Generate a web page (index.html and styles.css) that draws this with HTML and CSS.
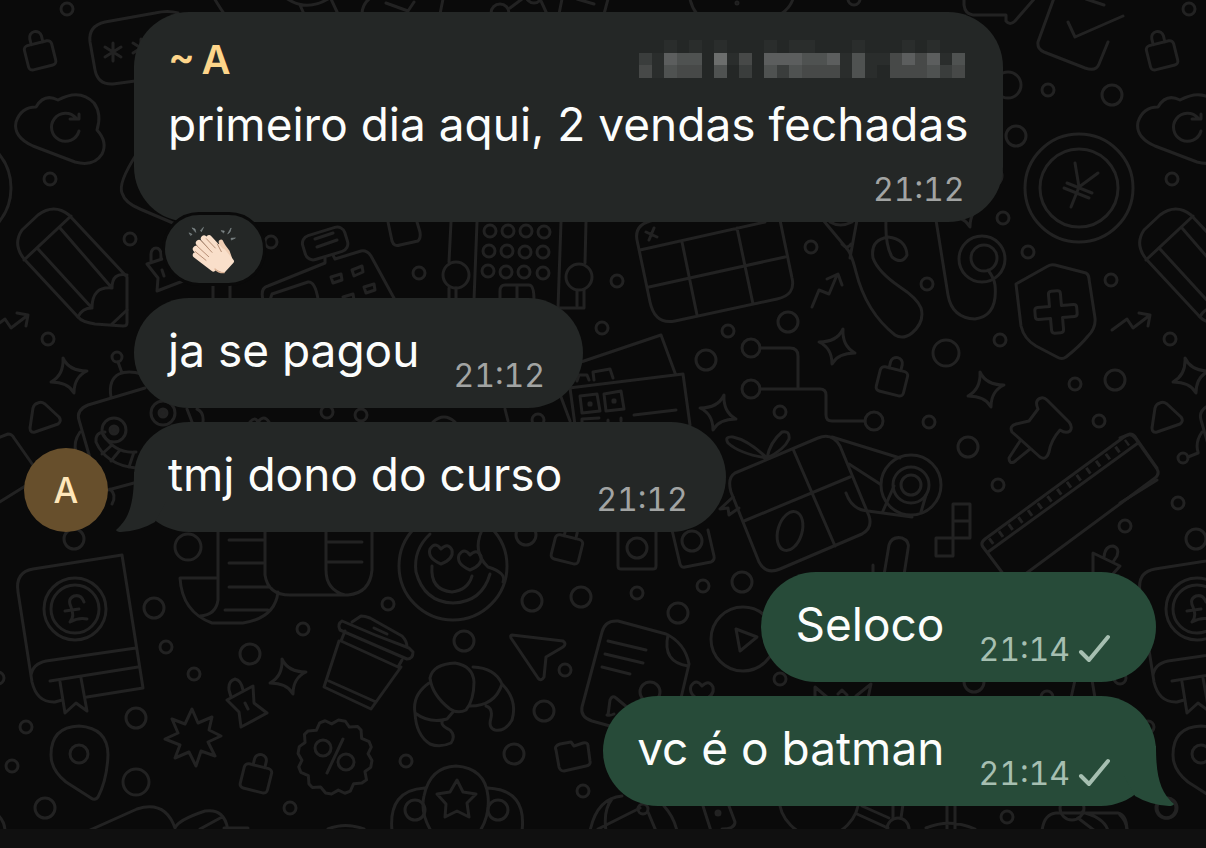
FILE: index.html
```html
<!DOCTYPE html>
<html lang="pt-BR">

<head>
    <meta charset="utf-8" />
    <title>Chat</title>
    <meta name="viewport" content="width=device-width, initial-scale=1">
    <link rel="stylesheet" href="styles.css">
</head>

<body>
    <main class="chat">
        <svg class="wallpaper" aria-hidden="true">
            <defs>
                <g id="lock">
                    <rect x="-14" y="-8" width="28" height="25" rx="4" />
                    <path d="M-6-8v-6a6 6 0 0 1 12 0v6" />
                </g>
                <path id="sparkle" d="M-6-18Q0-5 18-5Q5 1 5 17Q-1 6-18 6Q-5-1-6-18Z" />
                <path id="heart" d="M0 10Q-14 4-11-5Q-6-13 0-5Q7-12 11-4Q13 5 0 10Z" />
                <path id="asterisk" d="M0-9V9M-8-5L8 5M-8 5L8-5" />
                <circle id="s" r="6" />
                <circle id="m" r="10" />
                <circle id="l" r="13" />

                <g id="doodles">
                    <!-- dots -->
                    <use href="#s" x="67" y="9" /><use href="#s" x="50" y="179" /><use href="#s" x="130" y="239" />
                    <use href="#s" x="271" y="242" /><use href="#s" x="48" y="339" /><use href="#s" x="419" y="273" />
                    <use href="#s" x="617" y="281" /><use href="#s" x="602" y="328" /><use href="#s" x="811" y="247" />
                    <use href="#s" x="927" y="284" /><use href="#s" x="1003" y="218" /><use href="#s" x="1028" y="252" />
                    <use href="#s" x="728" y="331" /><use href="#s" x="1048" y="90" /><use href="#s" x="1111" y="280" />
                    <use href="#s" x="1000" y="340" /><use href="#s" x="1075" y="384" /><use href="#s" x="780" y="412" />
                    <use href="#s" x="929" y="422" /><use href="#s" x="1099" y="421" /><use href="#s" x="998" y="485" />
                    <use href="#s" x="1125" y="526" /><use href="#s" x="56" y="503" /><use href="#s" x="303" y="629" />
                    <use href="#s" x="166" y="647" /><use href="#s" x="194" y="674" /><use href="#s" x="-2" y="678" />
                    <use href="#s" x="26" y="727" /><use href="#s" x="12" y="766" /><use href="#s" x="290" y="808" />
                    <use href="#s" x="388" y="604" /><use href="#s" x="406" y="761" /><use href="#s" x="565" y="670" />
                    <use href="#s" x="637" y="593" /><use href="#s" x="703" y="586" /><use href="#s" x="583" y="791" />
                    <use href="#s" x="1007" y="817" /><use href="#s" x="780" y="679" /><use href="#s" x="538" y="420" />
                    <use href="#s" x="327" y="412" /><use href="#s" x="361" y="415" /><use href="#s" x="854" y="-1" />
                    <use href="#s" x="1047" y="697" />
                    <use href="#m" x="1112" y="95" /><use href="#m" x="1016" y="136" /><use href="#m" x="788" y="322" />
                    <use href="#m" x="706" y="360" /><use href="#m" x="1115" y="380" /><use href="#m" x="968" y="447" />
                    <use href="#m" x="74" y="539" /><use href="#m" x="154" y="608" /><use href="#m" x="250" y="654" />
                    <use href="#m" x="136" y="718" /><use href="#m" x="45" y="808" /><use href="#m" x="464" y="641" />
                    <use href="#m" x="532" y="601" /><use href="#m" x="581" y="597" /><use href="#m" x="678" y="613" />
                    <use href="#m" x="742" y="582" /><use href="#m" x="544" y="711" /><use href="#m" x="514" y="754" />
                    <use href="#m" x="526" y="535" /><use href="#m" x="650" y="692" /><use href="#m" x="992" y="176" />
                    <use href="#m" x="1166" y="808" /><use href="#m" x="974" y="682" />
                    <use href="#l" x="1008" y="85" /><use href="#l" x="188" y="547" /><use href="#l" x="946" y="353" />
                    <use href="#l" x="136" y="782" /><use href="#l" x="456" y="275" /><use href="#l" x="579" y="277" />

                    <!-- repeated small icons -->
                    <use href="#lock" transform="translate(39 51) rotate(-14)" />
                    <use href="#lock" transform="translate(893 377) rotate(14)" />
                    <use href="#lock" transform="translate(257 774) rotate(14)" />
                    <use href="#lock" transform="translate(568 545) rotate(14)" />
                    <use href="#sparkle" x="69" y="376" />
                    <use href="#sparkle" x="288" y="677" />
                    <use href="#sparkle" x="986" y="390" />
                    <use href="#sparkle" transform="translate(837 347) scale(-1 1)" />
                    <use href="#sparkle" transform="translate(718 413) scale(-1 1)" />
                    <use href="#sparkle" x="965" y="210" />
                    <path d="M-10 330L5 319L11 328L28 315M17 313L28 315L26 326" />
                    <path d="M812 307L819 290L829 294L837 275M827 279L838 274L842 285" />

                    <!-- top edge -->
                    <path d="M214-2Q220 8 225 15M286-2Q306 12 328-1M300 5L304 14M331-1L338 14M362 14Q362 5 369-1M386 3L408 11L414 2M443-1L440 14M510 8L522-1M541 1L547 14M562-1L559 14M577-1L594 4M608-1L604 14M690-1Q692 8 697 14M793-1Q790 8 781 14" />
                    <circle cx="500" cy="13" r="9" />
                    <circle cx="534" cy="-5" r="8" />
                    <circle cx="737" cy="3" r="1" />
                    <path d="M964-2V5Q965 14 973 15H1006V21Q1010 26 1015 21L1035-2" />
                    <path d="M1054-2L1038 42Q1037 49 1044 52L1085 68Q1096 72 1099 64L1108 42M1068 22L1075 37L1123 16M1086-1L1104 5" />

                    <!-- password card -->
                    <path d="M178 13Q168 10 155 13L105 22Q88 26 90 42L95 70Q98 85 113 84L150 79" />
                    <use href="#asterisk" x="113" y="52" />
                    <use href="#asterisk" x="141" y="48" />

                    <!-- cloud -->
                    <path d="M36 107Q44 93 58 100Q80 88 94 103Q102 114 97 130Q108 142 102 154Q94 167 75 162L33 146Q13 137 16 122Q21 107 36 107Z" />
                    <path d="M79 131A14 14 0 1 1 76 118M70 119H79V114" />

                    <!-- yen coin -->
                    <circle cx="-43" cy="188" r="54" />
                    <circle cx="-43" cy="188" r="39" />
                    <path d="M-47 163L-43 187L-24 173M-43 187L-51 207M-55 183L-30 193M-58 188L-33 198" />

                    <!-- pencil -->
                    <path d="M136 155Q118 183 122 193Q125 203 140 209L180 226" />
                    <path d="M25 260Q12 245 22 230L38 215Q54 203 69 215L127 277V323Q127 326 123 326L95 324Q82 322 78 317Z" />
                    <path d="M24 260L71 216M38 249L92 308M60 228L112 288M127 275Q112 272 112 288Q92 286 92 308Q82 308 78 317M112 324L127 310" />

                    <!-- clips and tags -->
                    <path d="M183 281L157 291L158 278L147 264L162 259M151 262V254A5 6 0 0 1 161 254V259M162 270L164 276M213 284V300M230 284V300" />
                    <path d="M227 700L253 686L254 703L267 713L241 727L239 712ZM231 697L229 690Q228 681 235 679Q241 680 243 690M245 703L248 709" />
                    <path d="M1093 575V553L1120 566L1112 575M1104 557Q1105 546 1113 546Q1120 548 1117 556L1113 562" />

                    <!-- cash register -->
                    <rect x="-22" y="-12" width="44" height="25" rx="8" transform="translate(325 243) rotate(-17)" />
                    <path d="M315 239L333 233M317 247L337 240M325 258V263L268 286Q260 288 263 300M333 255L335 259L361 251Q367 250 371 256L395 300M270 300L272 294L308 282Q315 281 318 299" />
                    <path d="M331 277L341 274L342 280L333 283ZM352 270L362 266L363 272L354 276ZM364 287L374 284L375 290L366 293ZM343 297L353 294L354 300" />
                    <path d="M388 222L392 241Q394 247 400 245L418 241Q421 238 420 232L417 222" />

                    <!-- phone mast -->
                    <path d="M451 222L449 262M477 222L474 300M561 222L558 308H584M586 222L585 263M449 288V300M456 288V300M577 290V306M584 290V308M500 300V291Q500 285 505 285H529Q534 285 534 300M517 285V300" />
                    <use href="#s" x="490" y="231" /><use href="#s" x="508" y="231" /><use href="#s" x="526" y="231" /><use href="#s" x="544" y="232" />
                    <use href="#s" x="489" y="251" /><use href="#s" x="507" y="251" /><use href="#s" x="525" y="252" /><use href="#s" x="543" y="252" />
                    <use href="#s" x="488" y="271" /><use href="#s" x="506" y="272" /><use href="#s" x="524" y="272" /><use href="#s" x="543" y="273" />

                    <!-- window -->
                    <path d="M654 220Q634 224 637 240L650 302Q655 325 675 321L777 299Q796 295 792 278L780 220M640 250L765 222M682 242L697 315M737 228L753 304M649 287L785 257M646 232L657 237M654 228L649 240" />

                    <!-- cables -->
                    <path d="M823 220L848 250Q852 256 856 272Q866 312 895 335Q903 340 912 333Q925 322 921 308Q917 298 900 287Q878 272 873 258Q870 240 888 237Q906 239 907 255Q902 265 892 257Q885 245 886 220M857 220L850 258M842 244Q847 250 851 244M936 220L948 295Q952 318 975 319Q998 316 995 285Q994 278 988 270M830 222Q840 228 852 222" />
                    <circle cx="982" cy="259" r="23" />
                    <circle cx="984" cy="258" r="13" />

                    <!-- shield -->
                    <path d="M1016 284L1048 266Q1051 264 1055 265L1086 273Q1089 275 1089 279L1095 318Q1096 328 1088 336Q1080 346 1066 357Q1062 360 1057 357L1036 346Q1024 339 1021 326Z" />
                    <path d="M-6-18Q-6-21-3-21H3Q6-21 6-18V-6H18Q21-6 21-3V3Q21 6 18 6H6V18Q6 21 3 21H-3Q-6 21-6 18V6H-18Q-21 6-21 3V-3Q-21-6-18-6H-6Z" transform="translate(1056 312) rotate(-5)" />

                    <!-- circuit -->
                    <circle cx="751" cy="348" r="9" />
                    <circle cx="751" cy="389" r="9" />
                    <circle cx="874" cy="421" r="9" />
                    <path d="M760 348H790Q798 348 798 356V389M760 389H820Q826 389 826 395V415Q826 421 832 421H865" />

                    <!-- tickets -->
                    <path d="M578 363L661 335L675 373M569 388L683 374L690 425M570 388L575 425M561 397L570 421M634 415L676 410M577 381L579 375L587 375L589 380M594 380L593 372L610 369L613 378M582 423V419L599 418M608 420V423M621 418V421M505 409L508 421M433 422Q444 412 455 422" />
                    <path d="M580 396L597 394L600 411L582 413ZM604 394L621 391L624 409L606 411ZM589 403h2v2h-2zM613 400h2v2h-2z" />

                    <!-- gift and tape -->
                    <path d="M735 473L818 438Q832 432 840 446L869 516Q873 528 862 534L780 569Q766 575 759 562L731 492Q727 478 735 473ZM793 449L835 546M744 521L850 477" />
                    <path d="M767 458Q740 454 728 443Q724 436 733 437Q748 440 767 458Q770 442 782 432Q790 430 789 439Q784 450 767 458Z" />
                    <ellipse cx="790" cy="531" rx="12" ry="20" transform="rotate(17 790 531)" />
                    <path d="M832 437L900 458M849 464L880 484M846 493Q852 510 868 511L912 517M894 486L883 511M926 495L921 512M733 497L720 509L728 508L729 515L739 508" />
                    <circle cx="911" cy="485" r="30" />
                    <circle cx="911" cy="485" r="18" />
                    <circle cx="911" cy="485" r="10" />

                    <path d="M953 504H970V538H953ZM953 521H970M936 538H953V556H936Z" />
                    <path d="M884 575L889 545Q892 536 902 538Q910 541 908 549L904 575M873 565V575" />

                    <!-- pushpin -->
                    <path d="M1038 409Q1034 400 1041 398Q1044 397 1047 400L1069 422Q1073 427 1070 431Q1066 434 1060 430Q1051 440 1049 452Q1046 461 1040 457L1012 432Q1009 426 1016 424L1029 421Z" />
                    <path d="M1020 441L1009 458Q1009 464 1014 462L1030 449" />

                    <!-- ruler -->
                    <path d="M1004 575L983 547Q980 543 985 539L1124 437Q1130 432 1135 438L1157 469Q1160 474 1155 478L1024 575M988 552L1138 443" />
                    <path d="M990 542L1128 442" stroke-width="7" stroke-dasharray="3 9" stroke-linecap="butt" />

                    <!-- robot -->
                    <circle cx="117" cy="357" r="5" />
                    <path d="M118 362L122 373M111 397Q108 380 119 374Q128 370 142 374M145 388L88 405Q76 410 79 420L90 458M80 432Q73 442 76 452M105 432Q95 432 96 442Q106 465 136 468M103 434Q115 454 136 452M112 445L102 454M120 450L111 461M134 452L129 467M108 490L134 483M110 489Q117 495 112 504" />
                    <circle cx="114" cy="430" r="12" />
                    <circle cx="163" cy="413" r="12" />
                    <circle cx="114" cy="430" r="4" class="solid" />
                    <circle cx="163" cy="413" r="4" class="solid" />
                    <circle cx="61" cy="458" r="5" />
                    <path d="M66 457L76 453M38 403Q41 401 45 404L59 417Q62 421 58 424L35 432Q30 433 30 428L33 408Q34 404 38 403ZM-2 438L8 434Q12 434 14 438L35 468M-2 503L35 480M187 409L192 422M197 409Q204 412 203 422M250 422Q255 416 258 422Q264 414 269 422" />

                    <!-- book -->
                    <path d="M33 569L122 555L143 688L87 697M33 569Q15 572 18 592L32 682Q37 703 55 702L62 700M31 676Q32 664 46 661L136 648M50 681L138 667M60 682L65 713L76 703L87 711L81 678" />
                    <circle cx="75" cy="609" r="31" />
                    <circle cx="75" cy="609" r="24" />
                    <path d="M84 602Q81 594 74 596Q67 599 71 607Q75 616 70 622Q79 617 87 619M65 611L79 609" />

                    <!-- map pin and badges -->
                    <path d="M51 755Q51 727 79 726Q108 728 108 755Q107 780 98 797Q95 801 91 798L66 782Q51 770 51 755Z" />
                    <circle cx="79" cy="754" r="9" />
                    <path d="M192 709L198 723L212 717L209 730L221 736L208 742L215 756L201 751L196 766L189 752L175 758L180 745L165 739L178 733L172 719L185 724Z" />
                    <path d="M37-3L37 4L32 9L35 17L31 21L23 23L21 31L16 34L9 32L3 37L-3 37L-9 32L-17 34L-21 31L-23 23L-31 21L-34 16L-32 9L-37 3L-37-4L-32-9L-34-17L-31-21L-23-23L-21-31L-16-34L-9-32L-3-37L4-37L9-32L17-34L21-31L23-23L31-21L34-16L32-9Z" transform="translate(335 757) rotate(10)" />
                    <circle cx="323" cy="748" r="8" />
                    <circle cx="346" cy="762" r="8" />
                    <path d="M343 739L327 773" />

                    <!-- coffee cup -->
                    <path d="M339 641L324 687L371 709L401 667M329 681L376 702M345 631L341 641L398 667L402 660M342 621Q337 624 340 630L407 659Q413 659 413 652L409 648Q376 636 342 621ZM352 622L361 616Q365 616 370 618L402 636Q407 641 407 647M374 628L387 634" />

                    <!-- scroll -->
                    <path d="M217 578H180Q182 612 212 623H243Q275 618 278 592M218 530V600Q216 615 200 616M229 540H264M229 563H264M229 587H270M225 610H268M265 530V575Q268 595 290 595H348Q370 593 372 570V530M326 530V570Q326 590 345 595M327 542H362M327 562H362" />

                    <!-- smiley sticker -->
                    <circle cx="453" cy="566" r="54" />
                    <path d="M430 534Q413 550 416 572Q424 602 453 603Q482 602 490 574M482 530Q472 552 488 567Q507 573 503 582M432 566Q430 590 452 592Q468 590 472 576" />
                    <use href="#heart" x="441" y="554" />
                    <use href="#heart" x="470" y="560" />

                    <path d="M618 530V566Q618 569 621 569H653Q656 569 656 566V530M672 530L680 564Q681 568 685 567L711 562Q715 560 714 556L708 530" />
                    <use href="#m" x="637" y="548" />
                    <use href="#m" x="692" y="541" />

                    <!-- croissant -->
                    <path d="M430 678Q433 664 455 663Q473 666 474 682Q474 700 466 710Q458 714 450 709Q432 695 430 678ZM429 683Q412 695 415 713Q430 724 447 719L453 712M415 713Q416 735 430 744Q440 748 451 743Q456 736 450 730Q439 725 443 720M473 667Q495 668 502 684Q495 706 470 706M502 684Q518 700 512 720Q505 732 495 730Q488 728 491 718Q493 708 486 706" />

                    <path d="M512 635L563 641Q567 644 563 647L546 657L544 677Q541 682 538 678L511 638Q510 635 512 635Z" />

                    <!-- document -->
                    <path d="M610 726L592 721Q580 717 582 707L602 632Q605 620 618 621L666 634Q685 643 689 664L681 698M668 635Q662 662 688 666M608 641L646 650M605 654L643 663M602 667L630 674M608 715L610 700Q612 695 616 698L628 708M607 715Q610 716 614 714" />
                    <use href="#heart" x="702" y="691" />
                    <circle cx="743" cy="639" r="32" />
                    <path d="M736 629L757 637L740 651Z" />
                    <path d="M556 750Q554 746 560 744L571 742L574 746L583 743Q588 742 588 746L590 761Q591 765 586 766L564 771Q560 771 559 767Z" />

                    <!-- medal -->
                    <path d="M431 831Q420 812 424 796Q430 767 456 766Q485 768 488 796Q490 815 480 831M392 831Q388 790 425 788M522 831Q527 790 488 788M457 780L463 792L476 794L467 803L469 817L457 811L445 817L446 804L437 794L450 792Z" />
                    <use href="#m" x="415" y="810" />
                    <use href="#m" x="498" y="810" />

                    <!-- bottom edge -->
                    <path d="M90 830L137 809Q165 800 175 828Q178 820 205 811Q225 808 228 831M200 829L222 817M224 828H248M328 829Q345 822 364 829M-2 815Q5 822 5 831" />
                    <path d="M590 831Q597 798 622 796M606 831Q603 810 612 799M598 829L640 808M648 812L656 831M664 806Q674 817 677 831M703 806L711 831M729 806L735 822Q735 829 722 829" />
                    <circle cx="643" cy="809" r="5" />
                    <circle cx="718" cy="813" r="2" class="solid" />
                    <circle cx="819" cy="797" r="40" />
                    <path d="M857 814L888 828M862 806L889 818M893 804V818M903 804L901 818M947 804V831M955 804V831M926 828Q950 818 975 829M1042 831Q1044 814 1056 813H1118Q1127 815 1127 831M1078 818L1095 831M1082 812Q1105 818 1108 831" />
                    <circle cx="898" cy="829" r="11" />
                    <circle cx="1072" cy="808" r="12" />
                    <path d="M815 698V687L828 698M856 696L871 684L868 698M838 694L842 690L847 695M1075 680L1071 698M1092 680L1095 698" />
                </g>
            </defs>
            <use href="#doodles" />
            <use href="#doodles" x="1122" />
        </svg>

        <section class="group incoming">
            <div class="avatar">A</div>
            <div class="messages">
                <div class="bubble bubble-long">
                    <div class="sender">
                        <span class="sender-name">~&thinsp;A</span>
                        <!-- redacted phone number -->
                        <svg class="mosaic" viewBox="0 0 26 3" fill="#fff" shape-rendering="crispEdges" role="img" aria-label="Número oculto">
                            <g fill-opacity=".03">
                                <path d="M2 0h1v1h-1zM4 0h1v1h-1zM6 0h1v1h-1zM10 0h1v1h-1zM12 0h2v1h-2zM17 0h1v1h-1zM21 0h1v1h-1zM23 0h1v1h-1z" />
                                <path d="M1 1h1v2h-1zM7 1h1v1h-1zM16 1h1v2h-1zM18 1h2v1h-2zM18 2h1v1h-1zM24 1h1v1h-1z" />
                            </g>
                            <g fill-opacity=".1">
                                <path d="M0 1h1v1h-1zM8 2h1v1h-1zM11 2h1v1h-1zM24 2h1v1h-1z" />
                            </g>
                            <g fill-opacity=".16">
                                <path d="M0 2h1v1h-1zM3 2h1v1h-1zM4 2h1v1h-1zM8 1h1v1h-1zM13 2h3v1h-3zM20 1h1v2h-1zM21 2h1v1h-1zM22 1h1v2h-1zM25 2h1v1h-1z" />
                            </g>
                            <g fill-opacity=".2">
                                <path d="M2 2h1v1h-1zM3 1h2v1h-2zM6 2h1v1h-1zM10 2h1v1h-1zM12 2h1v1h-1zM13 1h2v1h-2zM17 1h1v2h-1zM23 2h1v1h-1zM25 1h1v1h-1z" />
                            </g>
                            <g fill-opacity=".26">
                                <path d="M2 1h1v1h-1zM10 1h3v1h-3zM15 1h1v1h-1zM21 1h1v1h-1zM23 1h1v1h-1z" />
                            </g>
                            <path fill-opacity=".33" d="M6 1h1v1h-1z" />
                        </svg>
                    </div>
                    <div class="text">primeiro dia aqui, 2 vendas fechadas</div>
                    <div class="meta"><time>21:12</time></div>
                </div>
                <button class="reaction" type="button" aria-label="Reação: palmas">
                    <svg viewBox="84 52 156 156" width="52" height="52" fill="none" stroke-linecap="round" stroke-linejoin="round">
                        <path d="M88 82L96 86L93 89ZM97 67L105 70L107 79ZM130 66L124 78L122 75ZM184 75L193 76L191 81ZM213 68L210 79L204 84ZM225 97L213 98L214 102Z" fill="#7f8889" stroke="#7f8889" stroke-width="2" />
                        <path d="M183 109Q186 118 202 138L210 160L180 175L150 140" fill="#efcdb3" stroke="#efcdb3" stroke-width="14" />
                        <path d="M108 148L160 188M108 130L165 180M117 112L175 170M132 99L190 160M147 98L190 145" stroke="#f9dfca" stroke-width="19" />
                        <path d="M150 140L190 135L216 167L190 196L160 182Z" fill="#f9dfca" stroke="#f9dfca" stroke-width="12" />
                        <path d="M106 138L138 164M110 120L146 153M123 105L156 140M139 99L166 127M172 115L184 138" stroke="#b78f76" stroke-width="3" />
                        <path d="M165 190Q176 202 192 201" stroke="#dcb497" stroke-width="4" />
                    </svg>
                </button>
                <div class="bubble">
                    <div class="text">ja se pagou</div>
                    <div class="meta"><time>21:12</time></div>
                </div>
                <div class="bubble">
                    <svg class="tail" viewBox="0 0 50 60" aria-hidden="true">
                        <path d="M18 0C18 30 14 46 0 58Q1 60 5 60Q24 59 39 50L50 30V0Z" />
                    </svg>
                    <div class="text">tmj dono do curso</div>
                    <div class="meta"><time>21:12</time></div>
                </div>
            </div>
        </section>

        <section class="group outgoing">
            <div class="messages">
                <div class="bubble">
                    <div class="text">Seloco</div>
                    <div class="meta">
                        <time>21:14</time>
                        <svg class="check" viewBox="0 0 32 30" role="img" aria-label="Enviada"><path d="M3 18L11 26L30 3" /></svg>
                    </div>
                </div>
                <div class="bubble">
                    <svg class="tail" viewBox="0 0 50 60" aria-hidden="true">
                        <path d="M18 0C18 30 14 46 0 58Q1 60 5 60Q24 59 39 50L50 30V0Z" />
                    </svg>
                    <div class="text">vc é o batman</div>
                    <div class="meta">
                        <time>21:14</time>
                        <svg class="check" viewBox="0 0 32 30" role="img" aria-label="Enviada"><path d="M3 18L11 26L30 3" /></svg>
                    </div>
                </div>
            </div>
        </section>
    </main>
    <footer class="bottom-bar"></footer>
</body>

</html>
```
FILE: styles.css
```css
* {
    box-sizing: border-box;
}

body {
    margin: 0;
    min-height: 100vh;
    display: flex;
    flex-direction: column;
    background-color: #0a0a0a;
    color: #fcfdfc;
    font-family: Inter, "Liberation Sans", sans-serif;
}

.chat {
    position: relative;
    flex: 1;
    display: flex;
    flex-direction: column;
    gap: 40px;
    padding: 12px 50px 23px 24px;
    overflow: hidden;
}

.wallpaper {
    position: absolute;
    top: 0;
    left: 0;
    width: 100%;
    height: 100%;
    fill: none;
    stroke: #222222;
    stroke-width: 3;
    stroke-linecap: round;
    stroke-linejoin: round;
}

.wallpaper .solid {
    fill: #222222;
}

.group {
    position: relative;
    display: flex;
    align-items: flex-end;
    gap: 26px;
}

.outgoing {
    justify-content: flex-end;
}

.avatar {
    flex: none;
    width: 84px;
    height: 84px;
    border-radius: 50%;
    background-color: #674f2c;
    color: #ffe7ba;
    font-size: 35px;
    font-weight: 500;
    line-height: 84px;
    text-align: center;
}

.messages {
    display: flex;
    flex-direction: column;
    align-items: flex-start;
    gap: 14px;
}

.outgoing .messages {
    align-items: flex-end;
}

.bubble {
    position: relative;
    display: flex;
    gap: 34px;
    padding: 22px 34px 12px;
    border-radius: 55px;
    background-color: #242726;
}

.outgoing .bubble {
    padding-right: 46px;
    background-color: #274b39;
}

.bubble-long {
    flex-direction: column;
    gap: 0;
}

.sender {
    display: flex;
    justify-content: space-between;
    align-items: flex-start;
    height: 60px;
}

.sender-name {
    color: #fdd58a;
    font-size: 40px;
    font-weight: 600;
    line-height: 52px;
}

.mosaic {
    width: 326px;
    height: 38px;
    margin: 6px 4px 0 0;
}

.text {
    font-size: 46px;
    line-height: 60px;
}

.meta {
    display: flex;
    gap: 8px;
    padding: 36px 4px 0 0;
    color: #a2a4a3;
    font-size: 32px;
    font-variant-numeric: tabular-nums;
    line-height: 40px;
}

.bubble-long .meta {
    justify-content: flex-end;
    padding-top: 16px;
}

.outgoing .meta {
    padding-right: 0;
    color: #a6bfb1;
}

.check {
    width: 32px;
    height: 30px;
    margin-top: 4px;
    fill: none;
    stroke: currentColor;
    stroke-width: 4;
    stroke-linecap: round;
    stroke-linejoin: round;
}

.tail {
    position: absolute;
    left: -18px;
    bottom: 0;
    width: 50px;
    height: 60px;
    fill: #242726;
}

.outgoing .tail {
    left: auto;
    right: -18px;
    fill: #274b39;
    transform: scaleX(-1);
}

.reaction {
    position: relative;
    display: flex;
    align-items: center;
    justify-content: center;
    width: 104px;
    height: 74px;
    margin: -24px 0 -2px 28px;
    padding: 0;
    border: 3px solid #0a0a0a;
    border-radius: 37px;
    background-color: #242726;
    cursor: pointer;
}

.bottom-bar {
    height: 19px;
    background-color: #101010;
}
```
